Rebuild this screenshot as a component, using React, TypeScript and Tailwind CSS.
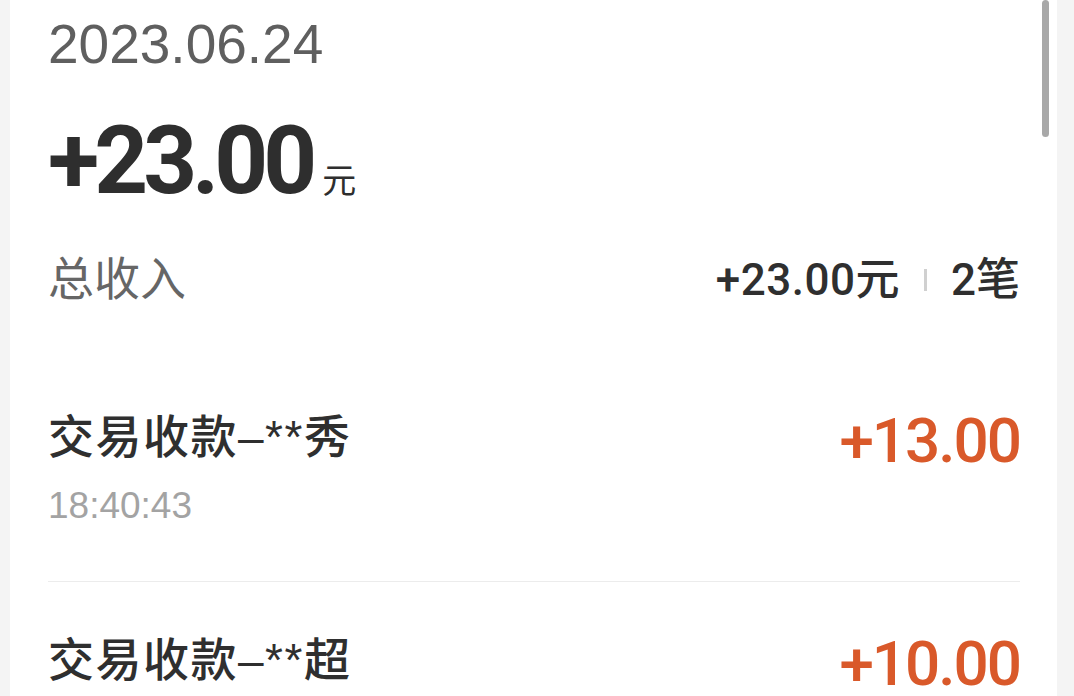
import React from "react";

const cjk = "font-['Liberation_Sans','Noto_Sans_CJK_SC',sans-serif]";

function Tx({ title, time, amount }: { title: string; time?: string; amount: string }) {
  return (
    <div className="flex justify-between items-start pt-[50px] pb-[55px] border-b border-[#ececec]">
      <div className="flex flex-col">
        <div className={`${cjk} text-[46px] leading-[56px] font-medium tracking-[1.5px] text-[#2f2f2f]`}>{title}</div>
        {time && (
          <div className="font-['Liberation_Sans',sans-serif] text-[37px] leading-[40px] text-[#a3a3a3] mt-[21px]">
            {time}
          </div>
        )}
      </div>
      <div className="font-['Roboto',sans-serif] text-[62px] leading-[56px] font-medium tracking-[-2px] text-[#d9592a] mt-[4px]">
        {amount}
      </div>
    </div>
  );
}

export default function App() {
  return (
    <div className="w-[1074px] h-[696px] overflow-hidden bg-[#f4f4f4] flex">
      <div className="relative ml-[10px] w-[1047px] h-full bg-white pl-[38px] pr-[37px]">
        <div className="absolute left-[1032px] top-0 w-[7px] h-[137px] rounded-full bg-[#a8a8a8]" />
        <div className="pt-[16px] font-['Liberation_Sans',sans-serif] text-[55px] leading-[56px] text-[#5f5f5f]">
          2023.06.24
        </div>
        <div className="mt-[42px] flex items-baseline h-[94px]">
          <span className="font-['Roboto',sans-serif] text-[94px] leading-[94px] font-bold tracking-[-5px] text-[#2e2e2e]">
            +23.00
          </span>
          <span className={`${cjk} text-[34px] text-[#2e2e2e] ml-[10px]`}>元</span>
        </div>
        <div className="mt-[43px] mb-[52px] flex justify-between items-baseline h-[56px]">
          <span className={`${cjk} text-[46px] leading-[56px] text-[#666666]`}>总收入</span>
          <div className="flex items-center h-[56px]">
            <span className="font-['Roboto','Noto_Sans_CJK_SC',sans-serif] text-[44px] leading-[56px] font-medium tracking-[0.5px] text-[#2f2f2f]">
              +23.00元
            </span>
            <span className="inline-block w-[3px] h-[22px] bg-[#d0d0d0] mx-[24px]" />
            <span className="font-['Roboto','Noto_Sans_CJK_SC',sans-serif] text-[44px] leading-[56px] font-medium text-[#2f2f2f]">
              2笔
            </span>
          </div>
        </div>
        <Tx title="交易收款–**秀" time="18:40:43" amount="+13.00" />
        <Tx title="交易收款–**超" amount="+10.00" />
      </div>
    </div>
  );
}
